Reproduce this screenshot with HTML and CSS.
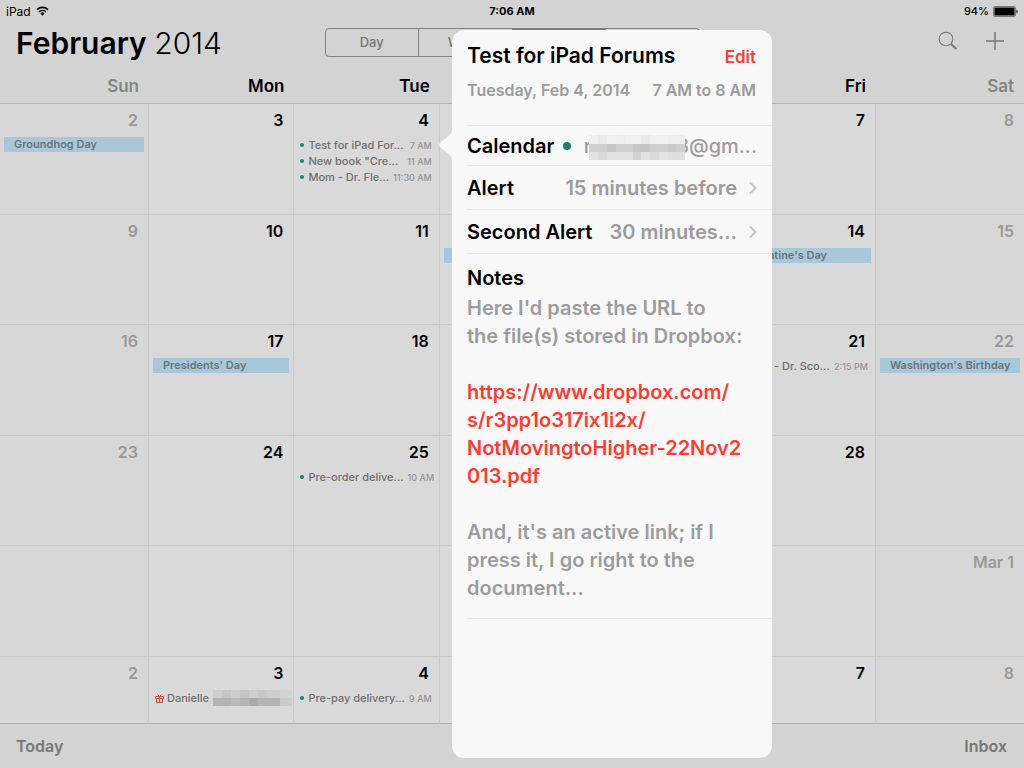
FILE: index.html
```
<!DOCTYPE html>
<html lang="en">
<head>
    <meta charset="UTF-8">
    <meta name="viewport" content="width=device-width, initial-scale=1.0">
    <title>Calendar</title>
    <link rel="stylesheet" href="styles.css">
</head>
<body>
    <header>
        <div class="status-bar">
            <div class="status-left">
                <span>iPad</span>
                <svg width="13" height="10" viewBox="0 0 13 10">
                    <path d="M1 3.6 A8 8 0 0 1 12 3.6" fill="none" stroke="#000" stroke-width="1.6"/>
                    <path d="M3 5.9 A5 5 0 0 1 10 5.9" fill="none" stroke="#000" stroke-width="1.6"/>
                    <path d="M4.4 7.4 A3 3 0 0 1 8.6 7.4 L6.5 9.7 Z"/>
                </svg>
            </div>
            <div class="status-time">7:06 AM</div>
            <div class="status-right">
                <span>94%</span>
                <svg width="25" height="11" viewBox="0 0 25 11">
                    <rect x="0.5" y="0.5" width="22" height="10" rx="1.5" fill="none" stroke="#777"/>
                    <rect x="1.5" y="1.5" width="20" height="8" rx="0.5"/>
                    <path d="M23.5 3.5 A2.4 2.4 0 0 1 23.5 7.5 Z"/>
                </svg>
            </div>
        </div>
        <div class="toolbar">
            <h1>February <span>2014</span></h1>
            <div class="segments">
                <button>Day</button>
                <button>Week</button>
                <button class="active" aria-label="Month"></button>
                <button aria-label="Year"></button>
            </div>
            <div class="tools">
                <button aria-label="Search">
                    <svg width="20" height="20" viewBox="0 0 20 20" fill="none" stroke="#777">
                        <circle cx="8" cy="8" r="6.8" stroke-width="1.1"/>
                        <path d="M13 13 L18.5 18" stroke-width="2"/>
                    </svg>
                </button>
                <button aria-label="Add event">
                    <svg width="18" height="18" viewBox="0 0 18 18" stroke="#777" stroke-width="1.5">
                        <path d="M9 0 V18 M0 9 H18"/>
                    </svg>
                </button>
            </div>
        </div>
    </header>

    <table class="month">
        <colgroup>
            <col class="sun"><col><col><col><col><col><col class="sat">
        </colgroup>
        <thead>
            <tr><th>Sun</th><th>Mon</th><th>Tue</th><th></th><th></th><th>Fri</th><th>Sat</th></tr>
        </thead>
        <tbody>
            <tr>
                <td><span class="date">2</span><div class="all-day">Groundhog Day</div></td>
                <td><span class="date">3</span></td>
                <td>
                    <span class="date">4</span>
                    <div class="event"><i class="dot"></i><span>Test for iPad For...</span><time>7 AM</time></div>
                    <div class="event"><i class="dot"></i><span>New book "Cre...</span><time>11 AM</time></div>
                    <div class="event"><i class="dot"></i><span>Mom - Dr. Fle...</span><time>11:30 AM</time></div>
                </td>
                <td></td>
                <td></td>
                <td><span class="date">7</span></td>
                <td><span class="date">8</span></td>
            </tr>
            <tr>
                <td><span class="date">9</span></td>
                <td><span class="date">10</span></td>
                <td><span class="date">11</span></td>
                <td><span class="date">&nbsp;</span><div class="all-day">&nbsp;</div></td>
                <td></td>
                <td><span class="date">14</span><div class="all-day">Valentine's Day</div></td>
                <td><span class="date">15</span></td>
            </tr>
            <tr>
                <td><span class="date">16</span></td>
                <td><span class="date">17</span><div class="all-day">Presidents' Day</div></td>
                <td><span class="date">18</span></td>
                <td></td>
                <td></td>
                <td><span class="date">21</span><div class="event"><i class="dot"></i><span>Mom - Dr. Sco...</span><time>2:15 PM</time></div></td>
                <td><span class="date">22</span><div class="all-day">Washington's Birthday</div></td>
            </tr>
            <tr>
                <td><span class="date">23</span></td>
                <td><span class="date">24</span></td>
                <td><span class="date">25</span><div class="event"><i class="dot"></i><span>Pre-order delive...</span><time>10 AM</time></div></td>
                <td></td>
                <td></td>
                <td><span class="date">28</span></td>
                <td></td>
            </tr>
            <tr>
                <td></td>
                <td></td>
                <td></td>
                <td></td>
                <td></td>
                <td></td>
                <td><span class="date">Mar 1</span></td>
            </tr>
            <tr>
                <td><span class="date">2</span></td>
                <td>
                    <span class="date">3</span>
                    <div class="event birthday">
                        <svg width="9" height="9" viewBox="0 0 9 9" fill="none" stroke="#e04848">
                            <path d="M0.5 2.5 H8.5 V4.5 H0.5 Z M1.5 4.5 V8.5 H7.5 V4.5 M4.5 2.5 V8.5 M4.5 2.5 L2.5 0.5 M4.5 2.5 L6.5 0.5"/>
                        </svg>
                        <span>Danielle (</span>
                        <svg class="mosaic" width="79" height="16" viewBox="0 0 79 16" shape-rendering="crispEdges">
                            <rect width="79" height="8" fill="#cdcdcd"/>
                            <rect x="9" width="9" height="8" fill="#c6c6c6"/>
                            <rect x="27" width="9" height="8" fill="#c5c5c5"/>
                            <rect x="45" width="9" height="8" fill="#c8c8c8"/>
                            <rect x="67" width="12" height="8" fill="#d4d4d4"/>
                            <rect y="8" width="67" height="8" fill="#b4b4b4"/>
                            <rect x="18" y="8" width="9" height="8" fill="#bababa"/>
                            <rect x="36" y="8" width="9" height="8" fill="#acacac"/>
                            <rect x="67" y="8" width="12" height="8" fill="#cbcbcb"/>
                        </svg>
                    </div>
                </td>
                <td><span class="date">4</span><div class="event"><i class="dot"></i><span>Pre-pay delivery...</span><time>9 AM</time></div></td>
                <td></td>
                <td></td>
                <td><span class="date">7</span></td>
                <td><span class="date">8</span></td>
            </tr>
        </tbody>
    </table>

    <footer>
        <button>Today</button>
        <button>Inbox</button>
    </footer>

    <section class="popover">
        <div class="popover-head">
            <div class="title-row">
                <h2>Test for iPad Forums</h2>
                <button class="edit">Edit</button>
            </div>
            <div class="when"><span>Tuesday, Feb 4, 2014</span><span>7 AM to 8 AM</span></div>
        </div>
        <div class="row calendar-row">
            <h3>Calendar</h3>
            <i class="dot"></i>
            <span class="value account">
                <span>r</span>
                <svg class="mosaic" width="96" height="25" viewBox="0 0 96 25" shape-rendering="crispEdges">
                    <rect width="96" height="9" fill="#f1f1f1"/>
                    <rect x="9" width="9" height="9" fill="#eaeaea"/>
                    <rect x="27" width="9" height="9" fill="#eeeeee"/>
                    <rect x="52" width="9" height="9" fill="#e9e9e9"/>
                    <rect x="79" width="17" height="9" fill="#eeeeee"/>
                    <rect y="9" width="96" height="8" fill="#cfcfcf"/>
                    <rect x="18" y="9" width="9" height="8" fill="#c6c6c6"/>
                    <rect x="44" y="9" width="17" height="8" fill="#c5c5c5"/>
                    <rect x="79" y="9" width="8" height="8" fill="#c9c9c9"/>
                    <rect y="17" width="96" height="8" fill="#e2e2e2"/>
                    <rect x="9" y="17" width="9" height="8" fill="#dadada"/>
                    <rect x="44" y="17" width="8" height="8" fill="#d2d2d2"/>
                    <rect x="61" y="17" width="9" height="8" fill="#dadada"/>
                    <rect x="79" y="17" width="17" height="8" fill="#dfdfdf"/>
                </svg>
                <span>8@gm...</span>
            </span>
        </div>
        <div class="row">
            <h3>Alert</h3>
            <span class="value">15 minutes before</span>
            <svg width="8" height="14" viewBox="0 0 8 14" fill="none" stroke="#c3c3c8" stroke-width="2"><path d="M1 1.5 L6.5 7 L1 12.5"/></svg>
        </div>
        <div class="row">
            <h3>Second Alert</h3>
            <span class="value">30 minutes...</span>
            <svg width="8" height="14" viewBox="0 0 8 14" fill="none" stroke="#c3c3c8" stroke-width="2"><path d="M1 1.5 L6.5 7 L1 12.5"/></svg>
        </div>
        <div class="notes">
            <h3>Notes</h3>
            <p>Here I'd paste the URL to<br>the file(s) stored in Dropbox:</p>
            <p><a href="#">https://www.dropbox.com/<br>s/r3pp1o317ix1i2x/<br>NotMovingtoHigher-22Nov2<br>013.pdf</a></p>
            <p>And, it's an active link; if I press it, I go right to the document...</p>
        </div>
    </section>
</body>
</html>
```
FILE: styles.css
```
* {
    box-sizing: border-box;
}
body {
    margin: 0;
    min-height: 100vh;
    display: flex;
    flex-direction: column;
    position: relative;
    background: #d3d3d3;
    color: #000;
    font-family: Inter, "Liberation Sans", sans-serif;
    font-weight: 600;
}
h1, h2, h3, p {
    margin: 0;
    font-weight: 600;
}
button {
    padding: 0;
    border: none;
    background: none;
    color: #777;
    font: inherit;
    cursor: pointer;
}
svg {
    display: block;
    flex-shrink: 0;
}

/* status bar */
.status-bar {
    display: grid;
    grid-template-columns: 1fr auto 1fr;
    align-items: center;
    height: 20px;
    padding: 2px 6px 0;
    font-size: 11px;
}
.status-left, .status-right {
    display: flex;
    align-items: center;
    gap: 5px;
}
.status-left {
    font-size: 12px;
    font-weight: 400;
}
.status-right {
    justify-content: flex-end;
    gap: 4px;
    font-weight: 500;
}
.status-time {
    font-weight: 700;
}

/* toolbar */
.toolbar {
    display: grid;
    grid-template-columns: 1fr 375px 1fr;
    align-items: center;
    height: 46px;
    padding: 0 16px;
}
h1 {
    font-size: 30px;
}
h1 span {
    font-weight: 300;
}
.segments {
    display: flex;
    height: 29px;
    margin-bottom: 2px;
    border: 1px solid #808080;
    border-radius: 4px;
    overflow: hidden;
}
.segments button {
    flex: 1;
    font-size: 13px;
    font-weight: 500;
}
.segments button + button {
    border-left: 1px solid #808080;
}
.segments .active {
    background: #777;
}
.tools {
    display: flex;
    justify-content: flex-end;
    align-items: center;
    gap: 28px;
    margin: 0 4px 4px 0;
}

/* month grid */
.month {
    width: 100%;
    table-layout: fixed;
    border-spacing: 0;
    background: #d9d9d9;
}
.sun {
    width: 149px;
}
.sat {
    width: 148px;
}
th {
    height: 38px;
    padding: 2px 10px 0 0;
    border-bottom: 1px solid #b4b4b4;
    background: #d3d3d3;
    font-size: 17px;
    font-weight: 600;
    text-align: right;
}
td {
    height: 111px;
    padding: 6px 4px 0;
    border-right: 1px solid #cbcbcb;
    border-bottom: 1px solid #cbcbcb;
    vertical-align: top;
}
tr:nth-child(even) td {
    height: 110px;
}
tbody tr:last-child td {
    height: 67px;
    border-bottom-color: #b0b0b0;
}
th:first-child, th:last-child {
    color: #868686;
}
td:first-child, td:last-child {
    background: #d7d7d7;
    color: #999;
}
td:last-child {
    border-right: none;
}
.date {
    display: block;
    padding-right: 6px;
    margin-bottom: 7px;
    font-size: 16px;
    line-height: 20px;
    text-align: right;
}
.all-day {
    padding-left: 10px;
    background: #a8c8d9;
    color: #6f7376;
    font-size: 11px;
    line-height: 15px;
}
.event {
    display: flex;
    align-items: center;
    gap: 4px;
    height: 16px;
    padding: 0 3px 0 2px;
    color: #6f6f6f;
    font-size: 11px;
    font-weight: 500;
    white-space: nowrap;
}
.event time {
    margin-left: auto;
    color: #949494;
    font-size: 9px;
}
.dot {
    flex-shrink: 0;
    width: 4px;
    height: 4px;
    border-radius: 50%;
    background: #1b8070;
}
.birthday {
    gap: 3px;
}
.birthday .mosaic {
    margin-left: -6px;
}

footer {
    display: flex;
    flex: 1;
    justify-content: space-between;
    align-items: center;
    padding: 0 17px 0 16px;
    font-size: 16px;
}

/* blocked-out private details, laid over the ends of the text */
.mosaic {
    position: relative;
}

/* event popover */
.popover {
    position: absolute;
    top: 30px;
    left: 452px;
    width: 320px;
    height: 728px;
    padding-left: 15px;
    border-radius: 12px;
    background: #f8f8f8;
    color: #9c9c9c;
    font-size: 20px;
}
.popover::before {
    content: "";
    position: absolute;
    top: 100px;
    left: -13px;
    width: 13px;
    height: 30px;
    background: #f8f8f8;
    clip-path: path("M13 0 C13 7 0 11 0 15 C0 19 13 23 13 30 Z");
}
.popover-head {
    height: 96px;
    padding: 12px 16px 0 0;
    border-bottom: 1px solid #e8e8ea;
}
.title-row, .when {
    display: flex;
    justify-content: space-between;
    align-items: center;
}
h2, h3 {
    color: #000;
    font-size: 20px;
    line-height: 28px;
}
h2 {
    font-size: 21px;
}
.edit {
    padding-top: 2px;
    color: #ff3b30;
    font-size: 17px;
}
.when {
    margin-top: 10px;
    font-size: 16px;
    line-height: 20px;
}
.row {
    display: flex;
    align-items: center;
    height: 44px;
    padding-right: 15px;
    border-bottom: 1px solid #e8e8ea;
}
.row .value {
    flex: 1;
    margin: 0 12px;
    text-align: right;
    white-space: nowrap;
}
.calendar-row {
    height: 40px;
}
.row .account {
    display: flex;
    align-items: center;
    justify-content: flex-end;
    margin: 0;
    font-weight: 500;
}
.account .mosaic {
    margin: 4px -9px 0 -2px;
}
.row .dot {
    width: 8px;
    height: 8px;
    margin-left: 9px;
}
.notes {
    padding: 10px 15px 16px 0;
    border-bottom: 1px solid #e8e8ea;
    line-height: 28px;
}
.notes h3 {
    margin-bottom: 2px;
}
.notes p {
    margin-bottom: 28px;
}
.notes p:last-child {
    margin-bottom: 0;
}
.notes a {
    color: #ff3b30;
    text-decoration: none;
}
```
